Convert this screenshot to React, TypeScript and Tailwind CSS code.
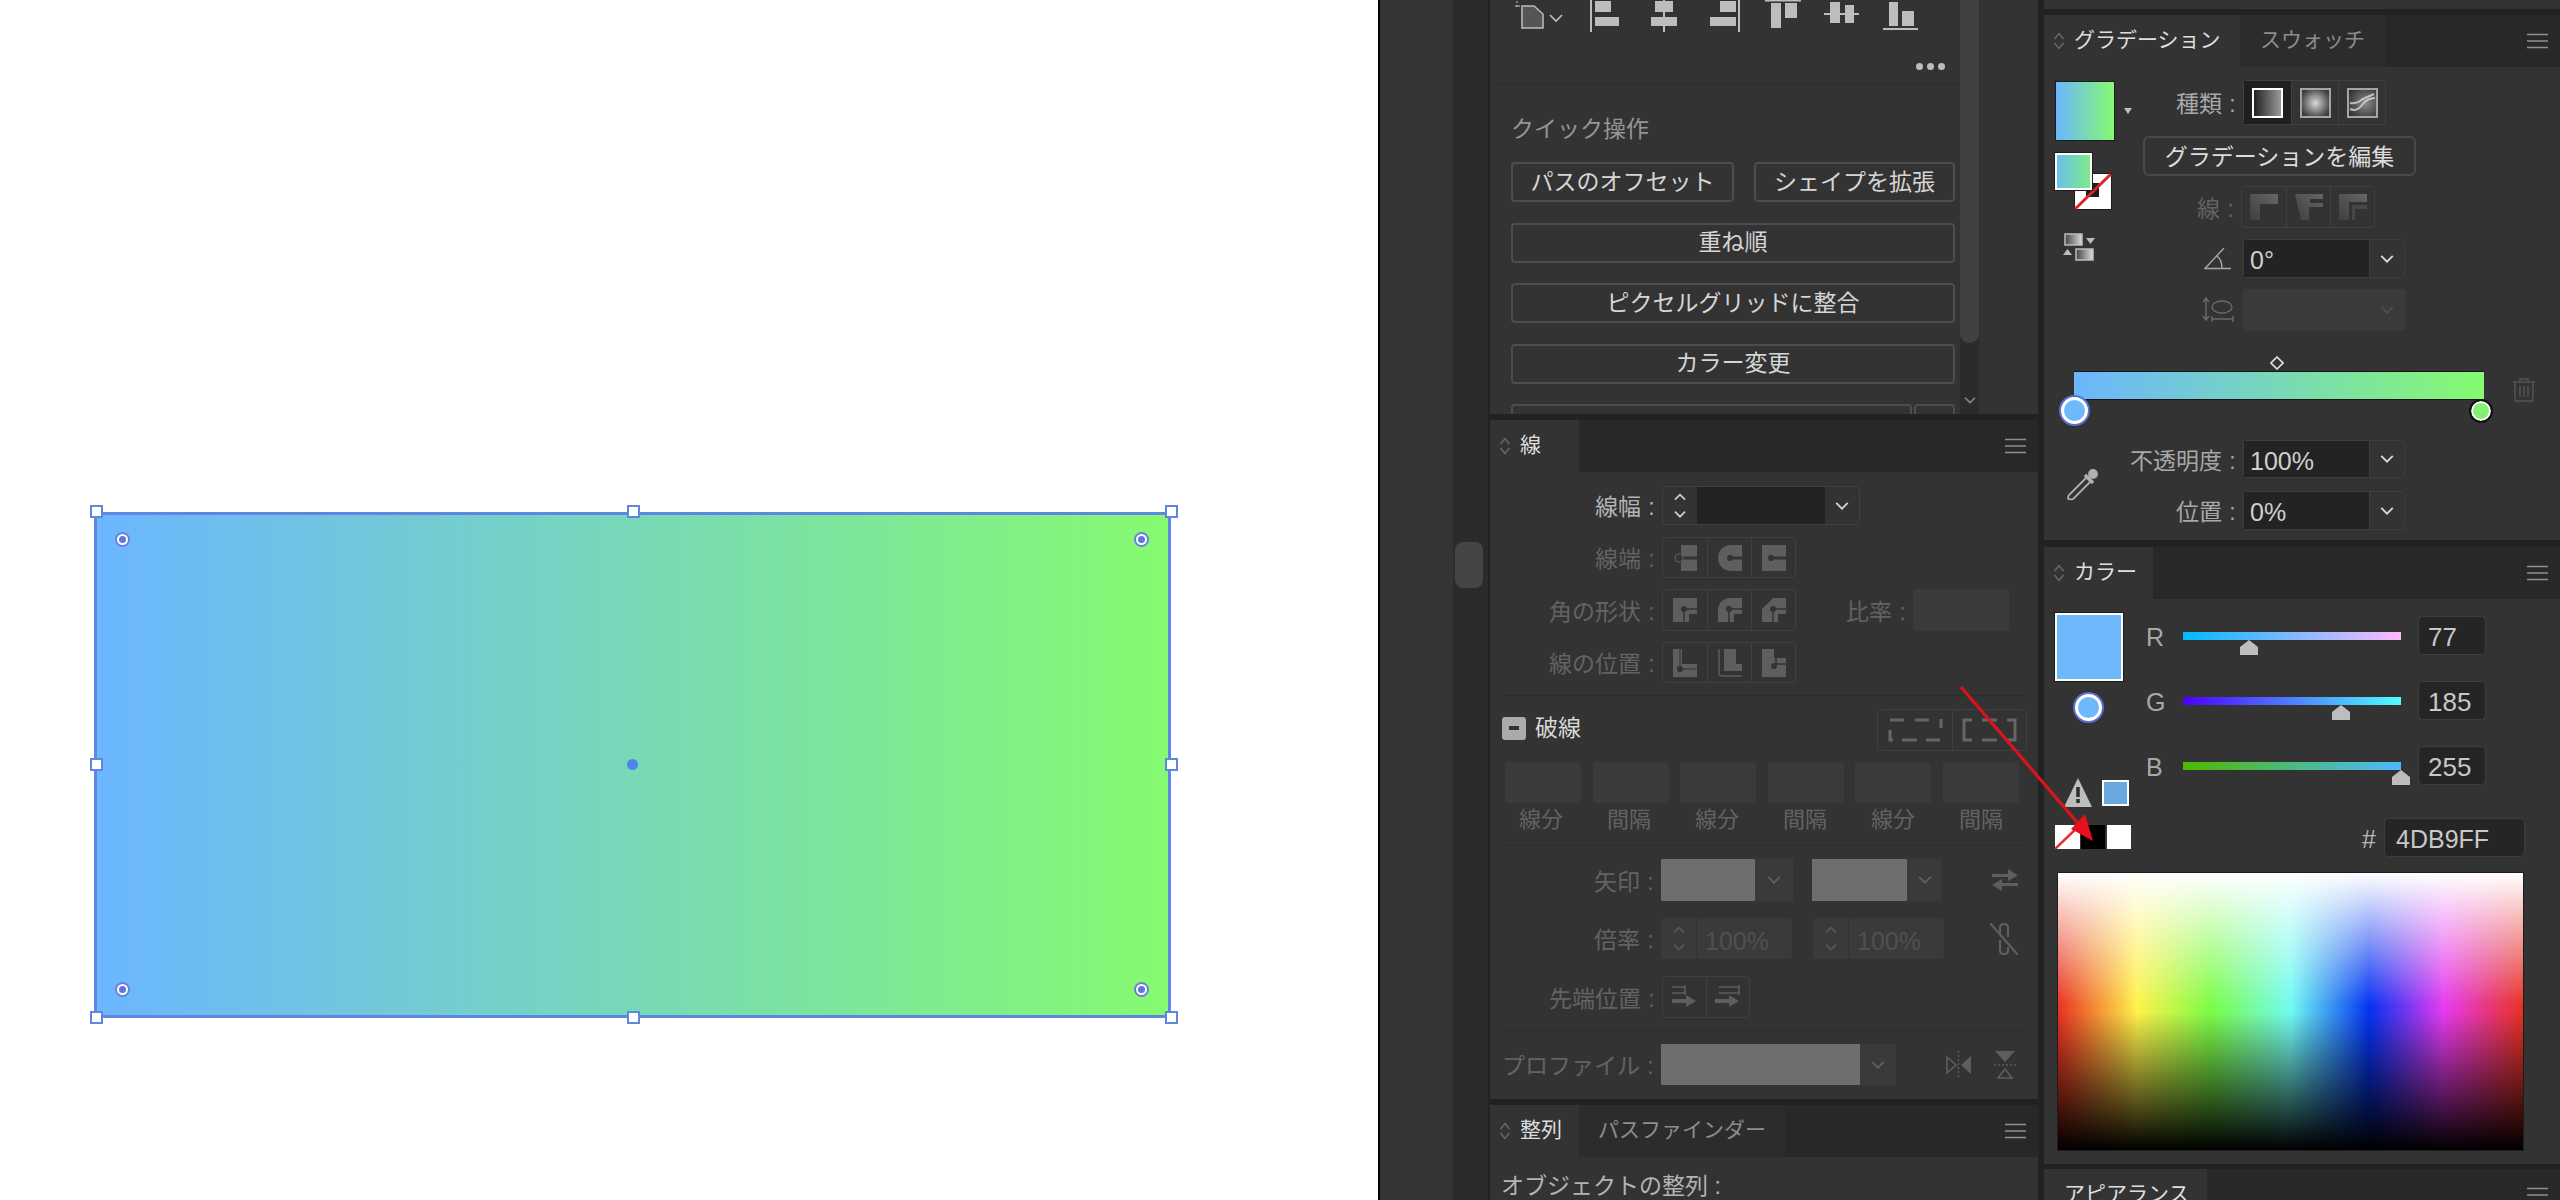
import React from "react";

const Chev = ({ c = "#d0d0d0", w = 16, up = false }: { c?: string; w?: number; up?: boolean }) => (
  <svg width={w} height={w * 0.6} viewBox="0 0 16 10" className="block">
    <polyline points={up ? "2,8 8,2 14,8" : "2,2 8,8 14,2"} fill="none" stroke={c} strokeWidth="2" />
  </svg>
);

const Burger = () => (
  <svg width="21" height="16" viewBox="0 0 21 16" className="block">
    <path d="M0 1.5H21M0 8H21M0 14.5H21" stroke="#8f8f8f" strokeWidth="1.6" />
  </svg>
);

const Updown = () => (
  <svg width="12" height="20" viewBox="0 0 12 20" className="block">
    <path d="M1.5 8 6 2.5 10.5 8M1.5 12 6 17.5 10.5 12" fill="none" stroke="#6a6a6a" strokeWidth="1.4" />
  </svg>
);

function Header({ tabs, first, rest, rootPad = "pl-[9px]", icon = true }: { tabs: string[]; first: string; rest?: string; rootPad?: string; icon?: boolean }) {
  return (
    <div className="h-[52px] shrink-0 flex bg-[#282828]">
      <div className={`${first} ${rootPad} bg-[#333333] flex items-center gap-[9px] text-[21px] text-[#dedede]`}>
        {icon && <Updown />}
        <span className="leading-none whitespace-nowrap pb-[3px]">{tabs[0]}</span>
      </div>
      {tabs[1] && (
        <div className={`${rest} bg-[#2c2c2c] flex items-center justify-center text-[21px] text-[#8c8c8c]`}>
          <span className="leading-none whitespace-nowrap pb-[3px]">{tabs[1]}</span>
        </div>
      )}
      <div className="ml-auto pr-[12px] flex items-center">
        <Burger />
      </div>
    </div>
  );
}

const QuickBtn = ({ label, cls = "w-full" }: { label: string; cls?: string }) => (
  <div className={`${cls} h-[40px] shrink-0 border-2 border-[#4d4d4d] rounded-[4px] flex items-center justify-center text-[23px] leading-none text-[#d6d6d6] whitespace-nowrap`}>
    {label}
  </div>
);

const Label = ({ w, children, cls = "text-[#636363]" }: { w: string; children: React.ReactNode; cls?: string }) => (
  <>
    <div className={`${w} ${cls} shrink-0 text-right text-[23px] leading-none whitespace-nowrap self-center pt-[4px]`}>{children}</div>
    <div className={`w-[21px] ${cls} shrink-0 text-center text-[23px] leading-none self-center pt-[4px]`}>:</div>
  </>
);

function Group({ items, cell }: { items: React.ReactNode[]; cell: string }) {
  return (
    <div className="flex h-full border border-[#404040] rounded-[4px]">
      {items.map((it, i) => (
        <div key={i} className={`${cell} h-full flex items-center justify-center ${i ? "border-l border-[#404040]" : ""}`}>
          {it}
        </div>
      ))}
    </div>
  );
}

const IC = "#5e5e5e";
const BG = "#333333";
const Ico = ({ children, w = 24, h = 26 }: { children: React.ReactNode; w?: number; h?: number }) => (
  <svg width={w} height={h} viewBox={`0 0 ${w} ${h}`} className="block">
    {children}
  </svg>
);

const capIcons = [
  <Ico key="a">
    <path d="M8 0H24V26H8Z" fill={IC} />
    <path d="M9 13H24" stroke={BG} strokeWidth="3" />
    <circle cx="6" cy="13" r="4" fill={BG} stroke={IC} strokeWidth="1.2" />
  </Ico>,
  <Ico key="b">
    <path d="M24 0H13A13 13 0 0 0 13 26H24Z" fill={IC} />
    <path d="M12 13H24" stroke={BG} strokeWidth="3" />
    <circle cx="12" cy="13" r="3" fill={BG} />
  </Ico>,
  <Ico key="c">
    <path d="M0 0H24V26H0Z" fill={IC} />
    <path d="M9 13H24" stroke={BG} strokeWidth="3" />
    <circle cx="9" cy="13" r="3" fill={BG} />
  </Ico>,
];
const cornerPaths = ["M0 0H24V16H16V24H0Z", "M0 24V12A12 12 0 0 1 12 0H24V16H16V24Z", "M0 24V11L11 0H24V16H16V24Z"];
const cornerIcons = cornerPaths.map((d) => (
  <Ico key={d} h={24}>
    <path d={d} fill={IC} />
    <path d="M11 24V11H24" fill="none" stroke={BG} strokeWidth="1.5" />
    <circle cx="11" cy="11" r="3" fill={BG} />
  </Ico>
));
const posIcons = [
  <Ico key="a" h={28}>
    <path d="M0 0H9V15H24V28H0Z" fill={IC} />
    <circle cx="7" cy="20" r="3" fill={BG} />
    <path d="M7 0V20H24" fill="none" stroke={BG} strokeWidth="1" />
  </Ico>,
  <Ico key="b" h={28}>
    <path d="M6 0H18V15H24V22H6Z" fill={IC} />
    <path d="M1 0V24Q1 27 5 27H24" fill="none" stroke={IC} strokeWidth="1.4" />
  </Ico>,
  <Ico key="c" h={28}>
    <path d="M0 0H12V9H24V28H0Z" fill={IC} />
    <circle cx="12" cy="17" r="3" fill={BG} />
    <path d="M14 0V15H24" fill="none" stroke={BG} strokeWidth="1.4" />
  </Ico>,
];
const tipIcons = [
  <Ico key="a" w={26} h={24}>
    <path d="M0 2H13M0 8H13M13 0V10" stroke={IC} strokeWidth="1.6" fill="none" />
    <path d="M0 14H14V10L24 16 14 22V18H0Z" fill={IC} />
  </Ico>,
  <Ico key="b" w={26} h={24}>
    <path d="M4 2H24M4 8H24M24 0V10" stroke={IC} strokeWidth="1.6" fill="none" />
    <path d="M0 14H14V10L24 16 14 22V18H0Z" fill={IC} />
  </Ico>,
];
const dashIcons = [
  <svg key="a" width="55" height="24" viewBox="0 0 55 24" className="block">
    <path d="M2 2H16M27 2H41M53 1V10M2 12V22H5M14 22H29M38 22H52" stroke="#666" strokeWidth="3" fill="none" />
  </svg>,
  <svg key="b" width="55" height="24" viewBox="0 0 55 24" className="block">
    <path d="M10 2H2V22H10M20 2H35M20 22H35M45 2H53V22H45" stroke="#666" strokeWidth="3" fill="none" />
  </svg>,
];

const Fld = ({ w }: { w: string }) => <div className={`${w} h-full bg-[#3a3a3a] rounded-[3px]`} />;
const Note = ({ t }: { t: string }) => <div className="w-[88px] text-center text-[22px] leading-none text-[#636363] pt-[4px]">{t}</div>;

function GraySel({ gray, arrow }: { gray: string; arrow: string }) {
  return (
    <div className="flex h-full">
      <div className={`${gray} bg-[#6e6e6e]`} />
      <div className={`${arrow} bg-[#3a3a3a] flex items-center justify-center`}>
        <Chev c="#5f5f5f" />
      </div>
    </div>
  );
}

function DimStep({ w }: { w: string }) {
  return (
    <div className={`${w} h-full flex bg-[#3a3a3a] rounded-[3px]`}>
      <div className="w-[36px] flex flex-col items-center justify-center gap-[9px] border-r border-[#333333]">
        <Chev c="#585858" w={14} up />
        <Chev c="#585858" w={14} />
      </div>
      <div className="flex-1 flex items-center pl-[8px] pt-[5px] text-[25px] leading-none text-[#505050]">100%</div>
    </div>
  );
}

function Sel({ text, cls = "text-[#cfcfcf]" }: { text: string; cls?: string }) {
  return (
    <div className="w-[162px] h-full flex border border-[#3e3e3e] rounded-[4px]">
      <div className={`w-[125px] bg-[#232323] flex items-center pl-[6px] pt-[4px] text-[25px] leading-none ${cls}`}>{text}</div>
      <div className="flex-1 flex items-center justify-center border-l border-[#3e3e3e]">
        <Chev c="#d8d8d8" />
      </div>
    </div>
  );
}

function Slider({ l, v, track }: { l: string; v: number; track: string }) {
  return (
    <div className="h-[39px] shrink-0 flex items-center">
      <div className="w-[37px] pt-[3px] text-[25px] leading-none text-[#a8a8a8]">{l}</div>
      <div className={`relative w-[218px] h-[8px] ${track}`}>
        <svg width="18" height="15" viewBox="0 0 18 15" className="absolute top-[8px]" style={{ left: (v / 255) * 218 - 9 }}>
          <path d="M9 0 18 7V15H0V7Z" fill="#bdbdbd" />
        </svg>
      </div>
      <div className="ml-[17px] w-[68px] h-full bg-[#252525] border border-[#3e3e3e] rounded-[5px] flex items-center pl-[9px] pt-[3px] text-[26px] leading-none text-[#c8c8c8]">
        {v}
      </div>
    </div>
  );
}

const Ring = ({ cls }: { cls: string }) => (
  <div className={`${cls} rounded-full bg-[#6eb8fc] border-[3px] border-white shadow-[0_0_0_2px_#5a6fd6]`} />
);

const Handle = ({ cls }: { cls: string }) => (
  <div className={`absolute ${cls} w-[13px] h-[13px] bg-white border-2 border-[#5f86e0]`} />
);
const Target = ({ cls }: { cls: string }) => (
  <div className={`absolute ${cls} w-[15px] h-[15px] rounded-full bg-white border-2 border-[#6a80d8] flex items-center justify-center`}>
    <div className="w-[7px] h-[7px] rounded-full bg-[#5a78dc]" />
  </div>
);

export default function App() {
  return (
    <div className="relative w-[2560px] h-[1200px] overflow-hidden flex bg-[#222222] [font-family:'Liberation_Sans','Noto_Sans_CJK_JP',sans-serif]">
      {/* canvas */}
      <div className="relative w-[1378px] h-full bg-white shrink-0">
        <div className="absolute left-[94px] top-[512px] w-[1077px] h-[506px] border-[3px] border-[#5f86e0] bg-[linear-gradient(to_right,#6bb6ff,#86fa70)]" />
        <Handle cls="left-[90px] top-[505px]" />
        <Handle cls="left-[627px] top-[505px]" />
        <Handle cls="left-[1165px] top-[505px]" />
        <Handle cls="left-[90px] top-[758px]" />
        <Handle cls="left-[1165px] top-[758px]" />
        <Handle cls="left-[90px] top-[1011px]" />
        <Handle cls="left-[627px] top-[1011px]" />
        <Handle cls="left-[1165px] top-[1011px]" />
        <Target cls="left-[115px] top-[532px]" />
        <Target cls="left-[1134px] top-[532px]" />
        <Target cls="left-[115px] top-[982px]" />
        <Target cls="left-[1134px] top-[982px]" />
        <div className="absolute left-[627px] top-[759px] w-[11px] h-[11px] rounded-full bg-[#4f84ee]" />
      </div>
      <div className="w-[2px] h-full bg-black shrink-0" />
      <div className="w-[73px] h-full bg-[#343434] shrink-0" />
      <div className="w-[35px] h-full bg-[#2b2b2b] shrink-0 pl-[2px] pt-[542px]">
        <div className="w-[28px] h-[46px] bg-[#454545] rounded-[8px]" />
      </div>

      {/* column 2 */}
      <div className="w-[552px] h-full shrink-0 px-[2px] flex flex-col">
        <div className="h-[414px] shrink-0 bg-[#333333] flex overflow-hidden">
          <div className="w-[470px] shrink-0">
            <svg width="470" height="36" viewBox="0 0 470 36" className="block" fill="#bdbdbd">
              <path d="M32 6H44L53 14V28H32Z" fill="#555" stroke="#bdbdbd" strokeWidth="1.5" />
              <path d="M27 1V3M27 5V7M25 6H30" stroke="#bdbdbd" strokeWidth="1" />
              <polyline points="60,15 66,21 72,15" fill="none" stroke="#bdbdbd" strokeWidth="1.6" />
              <rect x="100" y="0" width="2" height="32" />
              <rect x="105" y="1" width="16" height="11" />
              <rect x="105" y="17" width="24" height="9" />
              <rect x="173" y="0" width="2" height="32" />
              <rect x="165" y="1" width="18" height="11" />
              <rect x="161" y="17" width="26" height="9" />
              <rect x="248" y="0" width="2" height="32" />
              <rect x="230" y="1" width="16" height="11" />
              <rect x="220" y="17" width="26" height="9" />
              <rect x="275" y="0" width="36" height="1.5" />
              <rect x="281" y="3" width="10" height="25" />
              <rect x="295" y="3" width="12" height="15" />
              <rect x="334" y="13" width="35" height="2" />
              <rect x="340" y="2" width="10" height="21" />
              <rect x="355" y="5" width="9" height="18" />
              <rect x="393" y="28" width="35" height="2" />
              <rect x="399" y="2" width="9" height="24" />
              <rect x="412" y="11" width="12" height="15" />
            </svg>
            <div className="h-[47px] flex justify-end items-start pt-[27px] pr-[15px]">
              <div className="flex gap-[4px]">
                <div className="w-[7px] h-[7px] rounded-full bg-[#bdbdbd]" />
                <div className="w-[7px] h-[7px] rounded-full bg-[#bdbdbd]" />
                <div className="w-[7px] h-[7px] rounded-full bg-[#bdbdbd]" />
              </div>
            </div>
            <div className="h-[1px] bg-[#2c2c2c]" />
            <div className="pl-[21px] pr-[5px]">
              <div className="h-[32px] mt-[29px] flex items-center text-[23px] leading-none text-[#959595]">クイック操作</div>
              <div className="mt-[17px] flex flex-col gap-[20.6px]">
                <div className="flex justify-between">
                  <QuickBtn label="パスのオフセット" cls="w-[223px]" />
                  <QuickBtn label="シェイプを拡張" cls="w-[201px]" />
                </div>
                <QuickBtn label="重ね順" />
                <QuickBtn label="ピクセルグリッドに整合" />
                <QuickBtn label="カラー変更" />
                <div className="flex justify-between">
                  <QuickBtn label="" cls="w-[401px]" />
                  <QuickBtn label="" cls="w-[41px]" />
                </div>
              </div>
            </div>
          </div>
          <div className="w-[19px] shrink-0 bg-[#2b2b2b] flex flex-col items-center">
            <div className="w-[19px] h-[343px] shrink-0 bg-[#404040] rounded-b-[9px]" />
            <div className="mt-[53px]">
              <Chev c="#7e7e7e" w={14} />
            </div>
          </div>
        </div>

        <div className="h-[6px] shrink-0" />
        <Header tabs={["線"]} first="w-[89px]" />
        <div className="h-[627px] shrink-0 bg-[#333333] flex flex-col">
          <div className="mt-[14px] h-[39px] flex shrink-0">
            <Label w="w-[151px]" cls="text-[#b4b4b4]">線幅</Label>
            <div className="flex h-full w-[198px] border border-[#404040] rounded-[4px]">
              <div className="w-[34px] flex flex-col items-center justify-center gap-[8px]">
                <Chev w={14} up />
                <Chev w={14} />
              </div>
              <div className="w-[128px] bg-[#232323]" />
              <div className="flex-1 flex items-center justify-center">
                <Chev />
              </div>
            </div>
          </div>
          <div className="mt-[12px] h-[41px] flex shrink-0">
            <Label w="w-[151px]">線端</Label>
            <Group items={capIcons} cell="w-[44px]" />
          </div>
          <div className="mt-[11px] h-[42px] flex shrink-0">
            <Label w="w-[151px]">角の形状</Label>
            <Group items={cornerIcons} cell="w-[44px]" />
            <Label w="w-[96px]">比率</Label>
            <Fld w="w-[96px]" />
          </div>
          <div className="mt-[11px] h-[41px] flex shrink-0">
            <Label w="w-[151px]">線の位置</Label>
            <Group items={posIcons} cell="w-[44px]" />
          </div>
          <div className="mt-[12px] mx-[10px] h-[1px] bg-[#2c2c2c] shrink-0" />
          <div className="mt-[13px] h-[42px] flex shrink-0 items-center pl-[12px] pr-[11px]">
            <div className="w-[24px] h-[23px] mb-[4px] rounded-[3px] bg-[#ababab] flex items-center justify-center">
              <div className="w-[10px] h-[4px] bg-[#333333]" />
            </div>
            <div className="ml-[9px] mb-[4px] text-[23px] leading-none text-[#d8d8d8]">破線</div>
            <div className="ml-auto h-full">
              <Group items={dashIcons} cell="w-[74px]" />
            </div>
          </div>
          <div className="mt-[11px] h-[41px] flex shrink-0 pl-[15px] gap-[11.5px]">
            <Fld w="w-[76px]" />
            <Fld w="w-[76px]" />
            <Fld w="w-[76px]" />
            <Fld w="w-[76px]" />
            <Fld w="w-[76px]" />
            <Fld w="w-[76px]" />
          </div>
          <div className="h-[30px] flex shrink-0 items-center pl-[7px]">
            <Note t="線分" />
            <Note t="間隔" />
            <Note t="線分" />
            <Note t="間隔" />
            <Note t="線分" />
            <Note t="間隔" />
          </div>
          <div className="mt-[12px] mx-[10px] h-[1px] bg-[#2c2c2c] shrink-0" />
          <div className="mt-[13px] h-[42px] flex shrink-0">
            <Label w="w-[150px]">矢印</Label>
            <GraySel gray="w-[94px]" arrow="w-[38px]" />
            <div className="w-[19px]" />
            <GraySel gray="w-[95px]" arrow="w-[35px]" />
            <div className="ml-[50px] self-center">
              <svg width="26" height="24" viewBox="0 0 26 24" className="block" fill="#5e5e5e">
                <path d="M0 6H16V1L26 7.5 16 13V9H0Z" />
                <path d="M26 15H10V11L0 17 10 23V18H26Z" />
              </svg>
            </div>
          </div>
          <div className="mt-[17px] h-[41px] flex shrink-0">
            <Label w="w-[150px]">倍率</Label>
            <DimStep w="w-[131px]" />
            <div className="w-[21px]" />
            <DimStep w="w-[131px]" />
            <div className="ml-[46px] self-center">
              <svg width="28" height="32" viewBox="0 0 28 32" className="block" fill="none" stroke="#5e5e5e" strokeWidth="2.2">
                <path d="M0 0 28 32" />
                <path d="M10 10V5Q10 1 14 1T18 5V14M10 17V27Q10 31 14 31T18 27V24" />
              </svg>
            </div>
          </div>
          <div className="mt-[17px] h-[42px] flex shrink-0">
            <Label w="w-[151px]">先端位置</Label>
            <Group items={tipIcons} cell="w-[43px]" />
          </div>
          <div className="mt-[12px] mx-[10px] h-[1px] bg-[#2c2c2c] shrink-0" />
          <div className="mt-[13px] h-[41px] flex shrink-0">
            <Label w="w-[150px]">プロファイル</Label>
            <GraySel gray="w-[199px]" arrow="w-[36px]" />
            <div className="ml-[50px] self-center flex gap-[23px] items-center">
              <svg width="25" height="28" viewBox="0 0 25 28" className="block">
                <path d="M1 6 10 14 1 22Z" fill="none" stroke="#5e5e5e" strokeWidth="1.6" />
                <path d="M25 5V23L15 14Z" fill="#5e5e5e" />
                <path d="M12.5 0V28" stroke="#5e5e5e" strokeWidth="1.5" strokeDasharray="2 2" />
              </svg>
              <svg width="22" height="28" viewBox="0 0 22 28" className="block">
                <path d="M1 0H21L11 11Z" fill="#5e5e5e" />
                <path d="M4 27H18L11 18Z" fill="none" stroke="#5e5e5e" strokeWidth="1.6" />
                <path d="M0 14H22" stroke="#5e5e5e" strokeWidth="1.5" strokeDasharray="2 2" />
              </svg>
            </div>
          </div>
        </div>
        <div className="h-[6px] shrink-0" />
        <Header tabs={["整列", "パスファインダー"]} first="w-[89px]" rest="w-[206px]" />
        <div className="flex-1 bg-[#333333] pl-[11px] pt-[18px] text-[23px] leading-none text-[#b4b4b4] whitespace-nowrap">
          オブジェクトの整列 :
        </div>
      </div>

      {/* column 3 */}
      <div className="flex-1 h-full pl-[4px] flex flex-col">
        <div className="h-[9px] shrink-0 bg-[#333333]" />
        <div className="h-[6px] shrink-0" />
        <Header tabs={["グラデーション", "スウォッチ"]} first="w-[196px]" rest="w-[145px]" />
        <div className="h-[473px] shrink-0 bg-[#333333] flex flex-col">
          <div className="h-[264px] shrink-0 flex">
            <div className="w-[99px] shrink-0 pl-[11px] relative">
              <div className="mt-[14px] flex items-center gap-[9px]">
                <div className="w-[60px] h-[60px] border border-[#1c1c1c] bg-[linear-gradient(to_right,#6bb6ff,#86fa70)]" />
                <svg width="8" height="6" viewBox="0 0 8 6" className="block">
                  <path d="M0 0H8L4 6Z" fill="#bdbdbd" />
                </svg>
              </div>
              <div className="relative mt-[12px] w-[58px] h-[57px]">
                <svg width="38" height="37" viewBox="0 0 38 37" className="absolute left-[19px] top-[20px]">
                  <rect x="0.5" y="0.5" width="37" height="36" fill="#fff" stroke="#1c1c1c" />
                  <rect x="12" y="10" width="13" height="14" fill="#1e1e1e" />
                  <path d="M1 36 37 1" stroke="#d8262a" strokeWidth="3" />
                </svg>
                <div className="absolute left-0 top-0 w-[37px] h-[37px] border-2 border-white outline outline-1 outline-[#1c1c1c] bg-[linear-gradient(to_right,#6bc1e8,#7fe98c)]" />
              </div>
              <svg width="32" height="28" viewBox="0 0 32 28" className="block mt-[23px] ml-[8px]">
                <defs>
                  <linearGradient id="sw" x1="0" x2="1">
                    <stop offset="0" stopColor="#444" />
                    <stop offset="1" stopColor="#ddd" />
                  </linearGradient>
                </defs>
                <rect x="2" y="1" width="17" height="11" fill="url(#sw)" stroke="#bdbdbd" strokeWidth="1.5" />
                <path d="M23 5H32L27.5 11Z" fill="#bdbdbd" />
                <rect x="13" y="16" width="17" height="11" fill="url(#sw)" stroke="#bdbdbd" strokeWidth="1.5" />
                <path d="M0 22H9L4.5 16Z" fill="#bdbdbd" />
              </svg>
            </div>
            <div className="flex-1">
              <div className="mt-[13px] h-[45px] flex">
                <Label w="w-[79px]" cls="text-[#a8a8a8]">種類</Label>
                <Group
                  cell="w-[47px]"
                  items={[
                    <div key="a" className="w-[47px] h-full bg-[#1f1f1f] flex items-center justify-center">
                      <div className="w-[31px] h-[30px] border-2 border-white bg-[linear-gradient(to_right,#222222,#9a9a9a)]" />
                    </div>,
                    <div key="b" className="w-[31px] h-[30px] border-2 border-[#a5a5a5] bg-[radial-gradient(circle,#d8d8d8,#3c3c3c_85%)]" />,
                    <svg key="c" width="31" height="30" viewBox="0 0 31 30" className="block">
                      <defs>
                        <radialGradient id="fr" cx="0.6" cy="0.5" r="0.7">
                          <stop offset="0" stopColor="#8a8a8a" />
                          <stop offset="1" stopColor="#2c2c2c" />
                        </radialGradient>
                      </defs>
                      <rect x="1" y="1" width="29" height="28" fill="url(#fr)" stroke="#a5a5a5" strokeWidth="2" />
                      <path d="M3 21Q10 24 15 17T28 10M3 15Q9 16 13 13T27 6" fill="none" stroke="#e2e2e2" strokeWidth="2" opacity="0.75" />
                    </svg>,
                  ]}
                />
              </div>
              <div className="mt-[11px] w-[273px] h-[40px] border-2 border-[#4a4a4a] rounded-[6px] flex items-center justify-center pt-[3px] text-[23px] leading-none text-[#dcdcdc] whitespace-nowrap">
                グラデーションを編集
              </div>
              <div className="mt-[10px] h-[42px] flex">
                <Label w="w-[77px]">線</Label>
                <Group
                  cell="w-[44px]"
                  items={[
                    <svg key="a" width="28" height="26" viewBox="0 0 28 26" className="block">
                      <defs>
                        <linearGradient id="st" x1="0" y1="1" x2="1" y2="0">
                          <stop offset="0" stopColor="#3f3f3f" />
                          <stop offset="1" stopColor="#666" />
                        </linearGradient>
                      </defs>
                      <path d="M0 26V0H28V10H10V26Z" fill="url(#st)" />
                    </svg>,
                    <svg key="b" width="28" height="26" viewBox="0 0 28 26" className="block">
                      <path d="M0 0H28V5H15V9H28V13H14V26H6Z" fill="url(#st)" />
                    </svg>,
                    <svg key="c" width="28" height="26" viewBox="0 0 28 26" className="block">
                      <path d="M0 26V0H28V8H10V26Z" fill="url(#st)" />
                      <path d="M13 26V11H28V15H16V26Z" fill="#474747" />
                    </svg>,
                  ]}
                />
              </div>
              <div className="mt-[11px] h-[39px] flex">
                <div className="w-[100px] flex items-center justify-end pr-[12px]">
                  <svg width="27" height="22" viewBox="0 0 27 22" className="block" fill="none" stroke="#a8a8a8" strokeWidth="1.4">
                    <path d="M20 0 1 20.5H27" />
                    <path d="M13 8Q18 12 18 20" />
                  </svg>
                </div>
                <Sel text="0°" />
              </div>
              <div className="mt-[11px] h-[42px] flex">
                <div className="w-[100px] flex items-center justify-end pr-[9px]">
                  <svg width="32" height="26" viewBox="0 0 32 26" className="block" fill="none" stroke="#6a6a6a" strokeWidth="1.4">
                    <path d="M4 1V23M1 5 4 1 7 5M1 19 4 23 7 19" />
                    <ellipse cx="20" cy="10" rx="10" ry="6" />
                    <path d="M10 22H31M10 19V25M31 19V25" />
                  </svg>
                </div>
                <div className="w-[163px] h-full bg-[#3a3a3a] rounded-[3px] flex items-center justify-end pr-[11px]">
                  <Chev c="#4f4f4f" />
                </div>
              </div>
            </div>
          </div>
          <div className="mt-[25px] pl-[226px] h-[14px] shrink-0">
            <svg width="14" height="14" viewBox="0 0 14 14" className="block">
              <path d="M7 1 13 7 7 13 1 7Z" fill="none" stroke="#e2e2e2" strokeWidth="1.6" />
            </svg>
          </div>
          <div className="mt-[1px] h-[29px] shrink-0 flex">
            <div className="relative ml-[30px] w-[410px] h-[29px] border-y border-[#161616] bg-[linear-gradient(to_right,#6bb6ff,#86fa70)]">
              <Ring cls="absolute left-[-13px] top-[25px] w-[27px] h-[27px]" />
              <div className="absolute right-[-7px] top-[29px] w-[20px] h-[20px] rounded-full bg-[#86f070] border-2 border-white outline outline-2 outline-[#111111]" />
            </div>
            <svg width="22" height="24" viewBox="0 0 22 24" className="block ml-[29px] mt-[7px]" fill="none" stroke="#555" strokeWidth="1.4">
              <path d="M0 4H22M7 4V1H15V4M2 4V23H20V4M7 8V19M11 8V19M15 8V19" />
            </svg>
          </div>
          <div className="mt-[40px] flex shrink-0">
            <div className="w-[85px] shrink-0 pl-[22px] pt-[28px]">
              <svg width="33" height="33" viewBox="0 0 33 33" className="block" fill="none" stroke="#b0b0b0" strokeWidth="1.8">
                <path d="M21 9 3 27Q1 31 3 31 7 32 8 30L25 13" />
                <path d="M19 7 27 15" strokeWidth="3.6" />
                <circle cx="27" cy="6" r="4" fill="#b0b0b0" />
              </svg>
            </div>
            <div className="flex-1 flex flex-col gap-[13px]">
              <div className="h-[38px] flex">
                <Label w="w-[93px]" cls="text-[#a8a8a8]">不透明度</Label>
                <Sel text="100%" />
              </div>
              <div className="h-[39px] flex">
                <Label w="w-[93px]" cls="text-[#a8a8a8]">位置</Label>
                <Sel text="0%" />
              </div>
            </div>
          </div>
        </div>

        <div className="h-[7px] shrink-0" />
        <Header tabs={["カラー"]} first="w-[109px]" />
        <div className="h-[565px] shrink-0 bg-[#333333] flex flex-col">
          <div className="h-[258px] shrink-0 flex">
            <div className="w-[102px] shrink-0 pl-[11px]">
              <div className="mt-[14px] w-[68px] h-[68px] border-2 border-white outline outline-1 outline-[#1c1c1c] bg-[#6eb8fc]" />
              <div className="mt-[13px] ml-[20px]">
                <Ring cls="w-[27px] h-[27px]" />
              </div>
              <div className="mt-[57px] h-[29px] flex items-center gap-[10px] ml-[9px]">
                <svg width="28" height="29" viewBox="0 0 28 29" className="block">
                  <path d="M14 0 28 29H0Z" fill="#bdbdbd" />
                  <path d="M14 9V19M14 21V25" stroke="#2c2c2c" strokeWidth="3.5" />
                </svg>
                <div className="w-[27px] h-[26px] border-2 border-white bg-[#68a9e0]" />
              </div>
              <div className="mt-[18px] h-[24px] flex gap-[1px]">
                <svg width="25" height="24" viewBox="0 0 25 24" className="block">
                  <rect width="25" height="24" fill="#fff" />
                  <path d="M0 24 25 0" stroke="#e0302c" strokeWidth="2.5" />
                </svg>
                <div className="w-[24px] h-full bg-black" />
                <div className="w-[24px] h-full bg-white ml-[1px]" />
              </div>
            </div>
            <div className="flex-1 pt-[17px] flex flex-col gap-[26px]">
              <Slider l="R" v={77} track="bg-[linear-gradient(to_right,#02b9ff,#ffb9ff)]" />
              <Slider l="G" v={185} track="bg-[linear-gradient(to_right,#4d00ff,#4dffff)]" />
              <Slider l="B" v={255} track="bg-[linear-gradient(to_right,#4db900,#4db9ff)]" />
              <div className="mt-[7px] h-[39px] shrink-0 flex items-center justify-end pr-[35px]">
                <div className="text-[25px] leading-none text-[#b8b8b8] mr-[8px] pt-[3px]">#</div>
                <div className="w-[141px] h-full bg-[#252525] border border-[#3e3e3e] rounded-[5px] flex items-center pl-[11px] pt-[3px] text-[25px] leading-none text-[#c8c8c8]">
                  4DB9FF
                </div>
              </div>
            </div>
          </div>
          <div className="mt-[15px] ml-[13px] w-[467px] h-[279px] border border-[#1c1c1c] bg-[linear-gradient(to_bottom,#ffffff_0%,rgba(255,255,255,0)_48%,rgba(0,0,0,0)_50%,#000000_100%),linear-gradient(to_right,#e83222_0%,#fff24a_17%,#7cfc48_33%,#72fbf2_50%,#0432f2_67%,#e63bef_83%,#e83222_100%)]" />
        </div>
        <div className="h-[5px] shrink-0" />
        <Header tabs={["アピアランス"]} first="w-[163px]" rootPad="pl-[20px]" icon={false} />
      </div>

      {/* annotation arrow */}
      <svg width="2560" height="1200" viewBox="0 0 2560 1200" className="absolute left-0 top-0 pointer-events-none">
        <path d="M1961 687 2082 828" stroke="#d8141c" strokeWidth="3.2" />
        <path d="M2093 841 2071 829 2085 814Z" fill="#e8101c" />
      </svg>
    </div>
  );
}
